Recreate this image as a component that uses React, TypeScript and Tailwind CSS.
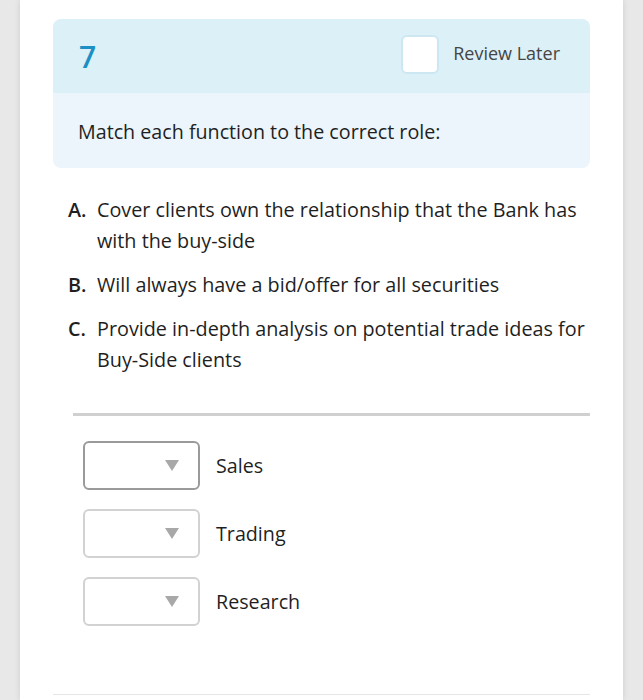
import { useState } from "react";

const items = [
  { key: "A.", text: "Cover clients own the relationship that the Bank has with the buy-side" },
  { key: "B.", text: "Will always have a bid/offer for all securities" },
  { key: "C.", text: "Provide in-depth analysis on potential trade ideas for Buy-Side clients" },
];

const roles = ["Sales", "Trading", "Research"];

function Dropdown({ active }: { active?: boolean }) {
  return (
    <div
      className={`w-[117px] h-[49px] rounded-[6px] border-2 bg-white flex items-center justify-end pr-[19px] ${
        active ? "border-[#9a9a9a]" : "border-[#d2d2d2]"
      }`}
    >
      <span className="w-0 h-0 border-l-[7px] border-r-[7px] border-t-[11px] border-l-transparent border-r-transparent border-t-[#a8a8a8]" />
    </div>
  );
}

export default function App() {
  const [review, setReview] = useState(false);

  return (
    <div
      className="min-h-[700px] bg-[#e8e8e8] flex justify-center"
      style={{ fontFamily: '"Open Sans", "Noto Sans", sans-serif' }}
    >
      <div className="w-[603px] bg-white px-[33px] pt-[19px] shadow-[0_0_6px_rgba(0,0,0,0.12)]">
        {/* Question header */}
        <div className="rounded-[8px] overflow-hidden">
          <div className="h-[74px] bg-[#dcf0f8] flex items-center justify-between pl-[26px] pr-[30px]">
            <span className="text-[30px] font-semibold text-[#1c8fc5] leading-none mt-[2px]">7</span>
            <button
              onClick={() => setReview(!review)}
              className="flex items-center gap-[14px] text-[18px] text-[#454545] -mt-[4px]"
            >
              <span className="w-[38px] h-[39px] rounded-[6px] bg-white border-2 border-[#cde7f2] flex items-center justify-center">
                {review && <span className="text-[#1c8fc5]">✓</span>}
              </span>
              <span className="-mt-[2px]">Review Later</span>
            </button>
          </div>
          <div className="h-[75px] bg-[#ebf5fb] flex items-center pl-[25px]">
            <span className="text-[19.7px] text-[#1f1f1f] mt-[2px]">Match each function to the correct role:</span>
          </div>
        </div>

        {/* Statements */}
        <ol className="mt-[26px] pl-[15px] flex flex-col gap-[13px]">
          {items.map((it) => (
            <li key={it.key} className="flex text-[19.8px] leading-[31px] text-[#1f1f1f]">
              <span className="w-[29px] shrink-0 font-semibold">{it.key}</span>
              <span>{it.text}</span>
            </li>
          ))}
        </ol>

        <div className="mt-[38px] ml-[20px] h-[3px] bg-[#d0d0d0]" />

        {/* Role selects */}
        <div className="mt-[25px] pl-[30px] flex flex-col gap-[19px]">
          {roles.map((r, i) => (
            <div key={r} className="flex items-center gap-[16px]">
              <Dropdown active={i === 0} />
              <span className="text-[19.7px] text-[#1f1f1f]">{r}</span>
            </div>
          ))}
        </div>

        <div className="mt-[68px] h-px bg-[#e6e6e6]" />
      </div>
    </div>
  );
}
